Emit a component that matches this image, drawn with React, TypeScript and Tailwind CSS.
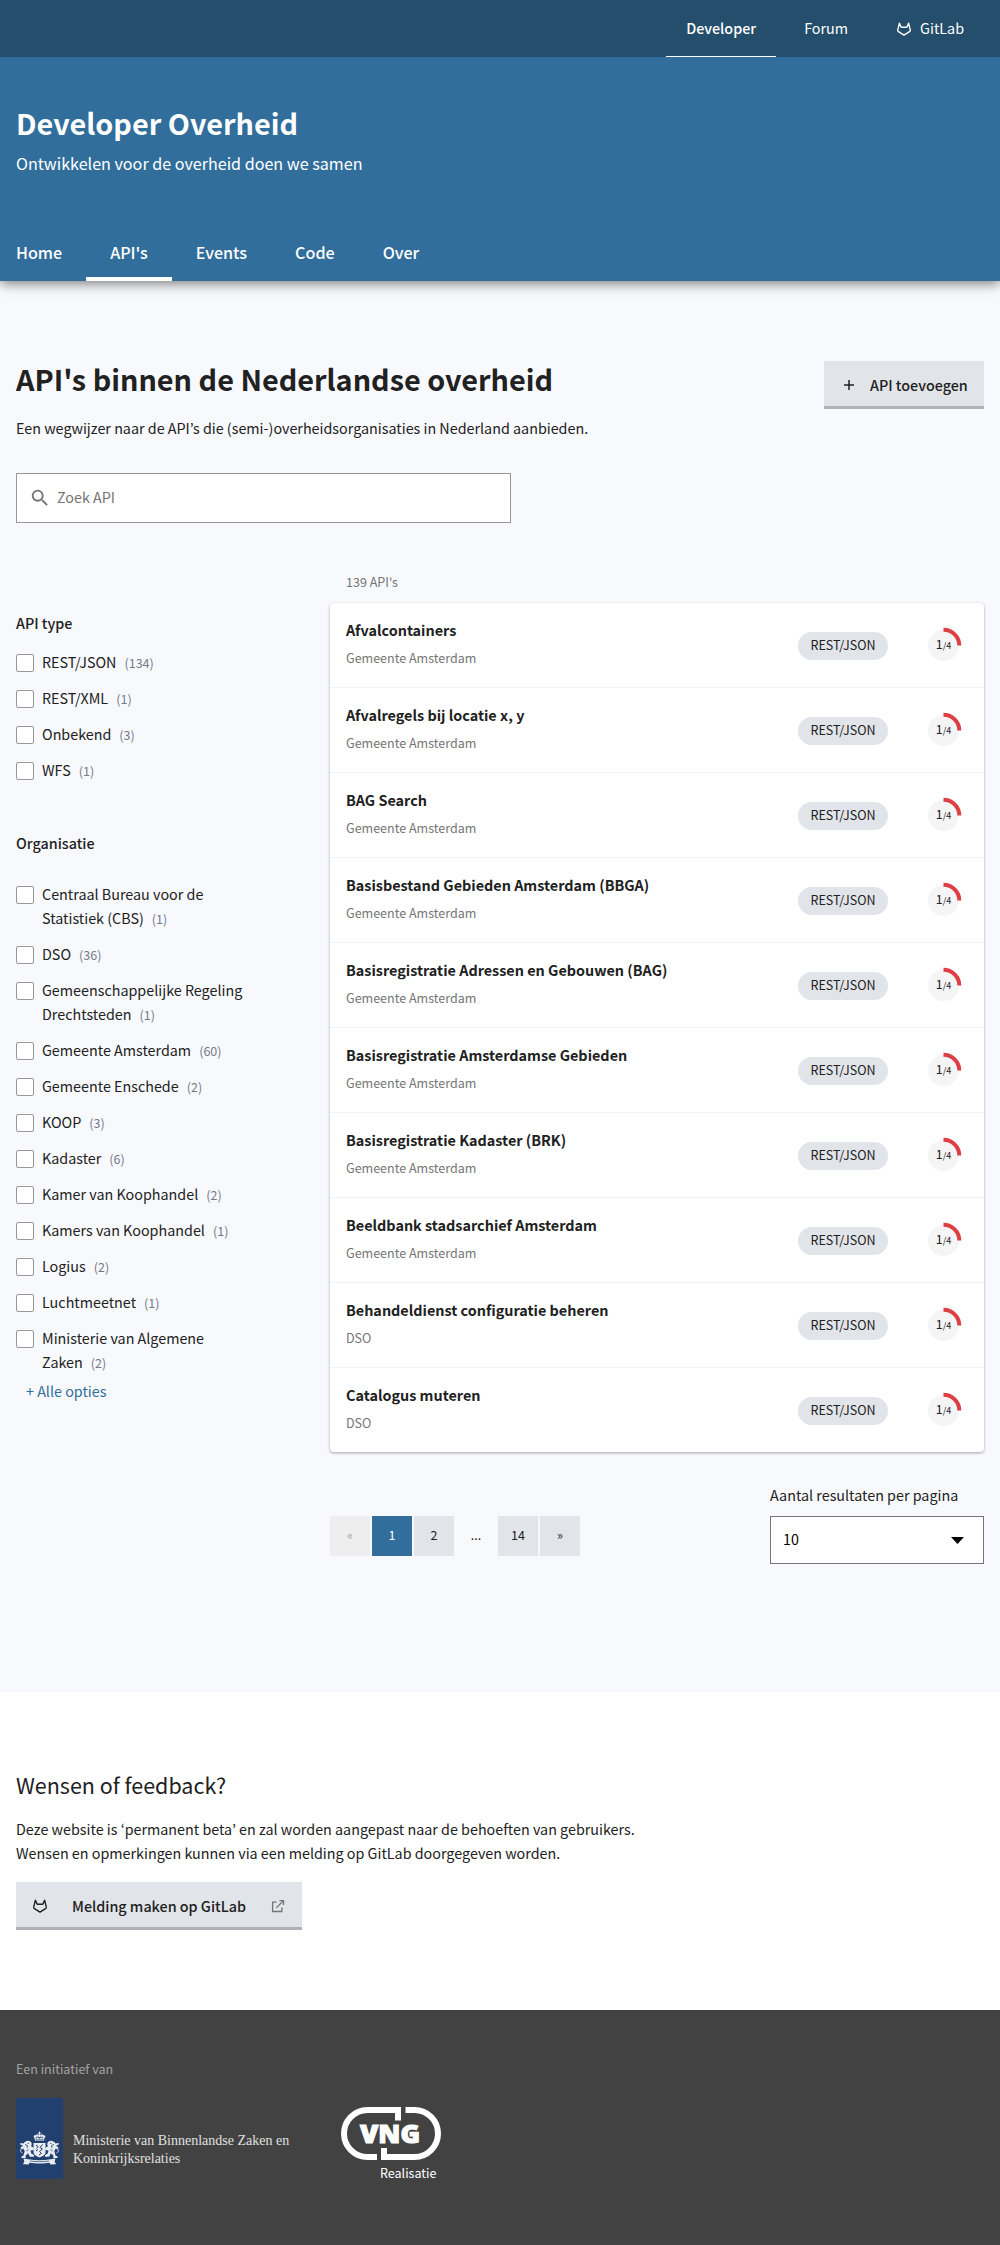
import { ReactNode } from "react";

const apiTypes: [string, number][] = [
  ["REST/JSON", 134],
  ["REST/XML", 1],
  ["Onbekend", 3],
  ["WFS", 1],
];

const organisations: [string, number][] = [
  ["Centraal Bureau voor de Statistiek (CBS)", 1],
  ["DSO", 36],
  ["Gemeenschappelijke Regeling Drechtsteden", 1],
  ["Gemeente Amsterdam", 60],
  ["Gemeente Enschede", 2],
  ["KOOP", 3],
  ["Kadaster", 6],
  ["Kamer van Koophandel", 2],
  ["Kamers van Koophandel", 1],
  ["Logius", 2],
  ["Luchtmeetnet", 1],
  ["Ministerie van Algemene Zaken", 2],
];

const apis: [string, string][] = [
  ["Afvalcontainers", "Gemeente Amsterdam"],
  ["Afvalregels bij locatie x, y", "Gemeente Amsterdam"],
  ["BAG Search", "Gemeente Amsterdam"],
  ["Basisbestand Gebieden Amsterdam (BBGA)", "Gemeente Amsterdam"],
  ["Basisregistratie Adressen en Gebouwen (BAG)", "Gemeente Amsterdam"],
  ["Basisregistratie Amsterdamse Gebieden", "Gemeente Amsterdam"],
  ["Basisregistratie Kadaster (BRK)", "Gemeente Amsterdam"],
  ["Beeldbank stadsarchief Amsterdam", "Gemeente Amsterdam"],
  ["Behandeldienst configuratie beheren", "DSO"],
  ["Catalogus muteren", "DSO"],
];

function GitLabIcon() {
  return (
    <svg className="h-4 w-4 shrink-0" viewBox="0 0 16 16" fill="none" stroke="currentColor" strokeWidth="1.4" strokeLinejoin="round">
      <path d="M3.4 2.2 5.2 6.3h5.6L12.6 2.2l1.7 7c.1.5 0 .8-.4 1.1L8 14.1l-5.9-3.8c-.4-.3-.5-.6-.4-1.1z" />
    </svg>
  );
}

function SearchIcon() {
  return (
    <svg className="h-[22px] w-[22px] shrink-0" viewBox="0 0 24 24" fill="#757575">
      <path d="M15.5 14h-.79l-.28-.27A6.471 6.471 0 0 0 16 9.5 6.5 6.5 0 1 0 9.5 16c1.61 0 3.09-.59 4.23-1.57l.27.28v.79l5 4.99L20.49 19l-4.99-5zm-6 0C7.01 14 5 11.99 5 9.5S7.01 5 9.5 5 14 7.01 14 9.5 11.99 14 9.5 14z" />
    </svg>
  );
}

function ExternalIcon() {
  return (
    <svg className="h-4 w-4 shrink-0" viewBox="0 0 16 16" fill="none" stroke="#757575" strokeWidth="1.3">
      <path d="M6.5 4.2H2.6v9.3h9.3V9.5M9.500 2.700h4V7M13.300 2.900 6.300 9.900" />
    </svg>
  );
}

function Score() {
  return (
    <div className="relative flex h-[31px] w-[31px] items-center justify-center rounded-full bg-[#f5f5f5] pb-0.5">
      <svg className="absolute -top-[3px] -left-[3px] h-[37px] w-[37px]" viewBox="0 0 37 37" fill="none">
        <path d="M18.5 2.7A15.8 15.8 0 0 1 34.3 18.5" stroke="#dc3f44" strokeWidth="4" />
      </svg>
      <span className="relative flex items-baseline leading-5">
        <span className="text-[12.5px]">1</span>
        <span className="text-[9px]">/4</span>
      </span>
    </div>
  );
}

function Filter({ label, count }: { label: string; count: number }) {
  return (
    <label className="mb-3 flex w-[236px] items-start">
      <span className="mt-[3px] mr-2 h-[18px] w-[18px] shrink-0 rounded-[2px] border border-[#979797] bg-white" />
      <span className="-mt-px mb-px max-w-[205px] text-[14.33px] leading-6">
        {label}
        <span className="ml-2 inline-block text-[12.54px] leading-5 text-[#75798a]">({count})</span>
      </span>
    </label>
  );
}

function NavItem({ children, active }: { children: ReactNode; active?: boolean }) {
  return (
    <a className={active ? "h-14 border-b-4 border-white px-6 pt-[15px]" : "h-14 px-6 pt-[15px]"}>
      {children}
    </a>
  );
}

function Lion() {
  return (
    <g>
      <path fill="#e8ecf2" d="M9.5 43.5c2.5-1.3 5-.6 6 1.5.5 1.3.2 2.5-.5 3.2l2.7 1.5v2.2l-3.2.6.8 3 2.7 1.500v1.8h-4.2l-1.6-3.5-2.7 2.5.3 2.2H5.500v-1.500l2-1 1.200-4.500-1.500-2.500-1.700 1-1-2 2.500-1.800-3-1.500.5-1.200 3 .6c.3-.9 1-1.600 2-2.100z" />
      <path stroke="#21406f" strokeWidth=".8" fill="none" d="M9 46.5l2.5 1-.5 2.5M12.5 51.5l-2 1.5M13 45.5l-1.5-.3" />
      <path stroke="#e8ecf2" strokeWidth=".9" fill="none" d="M6.5 55c-2.5-1-2.2-3-1-4.5" />
    </g>
  );
}

function Crest() {
  return (
    <svg className="h-[81px] w-[47px] shrink-0" viewBox="0 0 47 81">
      <path fill="#21406f" d="M0 0h47v81H0z" />
      <g fill="#e8ecf2">
        <path d="M23.1 33.5h.9v1.2h1.3v.9H24v1.6h-.9v-1.6h-1.3v-.9h1.3z" />
        <circle cx="19.2" cy="38.5" r="1.5" />
        <circle cx="21.3" cy="37.5" r="1.3" />
        <circle cx="23.5" cy="38" r="1.3" />
        <circle cx="25.7" cy="37.5" r="1.3" />
        <circle cx="27.8" cy="38.5" r="1.5" />
        <path d="M18.3 39.5l2 1.2 1.2-1.5 2 1.5 2-1.5 1.2 1.5 2-1.2-.9 3.5h-8.6z" />
        <path d="M17.5 45h12v9c0 3-3 4.3-6 5.5-3-1.2-6-2.5-6-5.5z" />
      </g>
      <path stroke="#21406f" strokeWidth="1" fill="none" d="M20 47l2 1.5-1.5 2M26.5 46.5l-2.5 3 2.5 1.5-3 2.5 2 2-2.5 1.5M20 53l2-1.5M19.5 42h8" />
      <Lion />
      <g transform="translate(47 0) scale(-1 1)">
        <Lion />
      </g>
      <path fill="#e8ecf2" d="M7.5 60.5l5 .8c7 1.2 15 1.2 22 0l5-.8-.8 3 1.3 2.7-5.5.3-1-1.7c-6 .9-14 .9-20 0l-1 1.7-5.5-.3 1.3-2.7z" />
      <path stroke="#21406f" strokeWidth=".7" fill="none" d="M14 63c6 .9 13 .9 19 0" />
    </svg>
  );
}

function VngLogo() {
  return (
    <svg className="block h-[53px] w-[100px]" viewBox="0 0 100 53" fill="none" stroke="#fff" strokeWidth="6">
      <path d="M57 13.5V3H26.5a23.5 23.5 0 0 0 0 47H36M43 41v9h30.5a23.5 23.5 0 0 0 0-47H64.5" />
      <text x="19" y="36" textLength="60" lengthAdjust="spacingAndGlyphs" fill="#fff" strokeWidth="1" className="font-['Open_Sans'] text-[24.5px] font-extrabold">VNG</text>
    </svg>
  );
}

export default function App() {
  return (
    <div className="min-h-[2245px] bg-white font-['Noto_Sans_CJK_KR',sans-serif] text-[14.33px] leading-6 text-[#212121]">
      <div className="relative z-10 flex h-[57px] justify-end gap-2 bg-[#244e6c] pr-4 text-white">
        <a className="border-b border-white px-5 pt-4 font-medium">Developer</a>
        <a className="px-5 pt-4">Forum</a>
        <a className="flex items-start gap-2 px-5 pt-4">
          <span className="mt-[5px]">
            <GitLabIcon />
          </span>
          GitLab
        </a>
      </div>

      <header className="relative flex h-[224px] flex-col bg-[#316e9b] text-white shadow-[0_2px_12px_rgba(0,0,0,0.55)]">
        <h1 className="mt-[46px] ml-4 text-[28.8px] leading-10 font-bold">Developer Overheid</h1>
        <p className="mt-2 ml-4 text-[16.12px] leading-6">Ontwikkelen voor de overheid doen we samen</p>
        <nav className="mt-auto -ml-2 flex text-[16.12px] leading-6 font-medium">
          <NavItem>Home</NavItem>
          <NavItem active>API's</NavItem>
          <NavItem>Events</NavItem>
          <NavItem>Code</NavItem>
          <NavItem>Over</NavItem>
        </nav>
      </header>

      <main className="h-[1411px] bg-[#f8f9fd] px-4 pt-20">
        <div className="flex justify-between">
          <div>
            <h2 className="-mt-0.5 text-[28.8px] leading-10 font-bold">API's binnen de Nederlandse overheid</h2>
            <p className="mt-[17px]">Een wegwijzer naar de API’s die (semi-)overheidsorganisaties in Nederland aanbieden.</p>
          </div>
          <button className="flex h-12 w-40 items-center border-b-[3px] border-[#b0b2b7] bg-[#e1e4e9] pt-0.5 pl-5 font-medium whitespace-nowrap">
            <svg className="mr-4 h-2.5 w-2.5" viewBox="0 0 10 10" stroke="#212121" strokeWidth="1.5">
              <path d="M5 0v10M0 5h10" />
            </svg>
            API toevoegen
          </button>
        </div>
        <div className="mt-[33px] flex h-[50px] w-[495px] items-center border border-[#979797] bg-white pl-3 text-[#757575]">
          <SearchIcon />
          <span className="mb-[3px] ml-1.5">Zoek API</span>
        </div>

        <div className="mt-[47px] flex justify-between">
          <aside className="w-[250px] pt-[41px]">
            <h3 className="font-medium">API type</h3>
            <div className="mt-4">
              {apiTypes.map(([l, c]) => (
                <Filter key={l} label={l} count={c} />
              ))}
            </div>
            <h3 className="mt-12 font-medium">Organisatie</h3>
            <div className="mt-7">
              {organisations.map(([l, c]) => (
                <Filter key={l} label={l} count={c} />
              ))}
            </div>
            <a className="-mt-2 ml-2.5 block text-[#316e9b]">+ Alle opties</a>
          </aside>

          <section className="w-[654px] pt-0.5">
            <p className="pl-4 text-[12.54px] leading-5 text-[#757575]">139 API's</p>
            <ul className="mt-[11px] rounded bg-white shadow-[0_1px_3px_rgba(0,0,0,0.35)]">
              {apis.map(([name, org]) => (
                <li key={name} className="flex h-[85px] items-start border-b border-[#f1f2f4] pl-4 last:h-[84px] last:border-0">
                  <div className="grow pt-[15px]">
                    <div className="text-[14.4px] leading-6 font-bold">{name}</div>
                    <div className="mt-1.5 text-[12.54px] leading-5 text-[#757575]">{org}</div>
                  </div>
                  <span className="mt-[29px] flex h-7 w-[90px] items-center justify-center rounded-full bg-[#e1e4e9] pb-0.5 text-[12.54px]">REST/JSON</span>
                  <div className="mt-[27px] mr-[25px] ml-10">
                    <Score />
                  </div>
                </li>
              ))}
            </ul>

            <div className="mt-[31px] flex items-end justify-between">
              <div className="mb-2 flex gap-0.5 text-[12.54px]">
                <span className="flex h-10 w-10 items-center justify-center bg-[#eeeeee] pb-0.5 text-[#a3a3a3]">«</span>
                <span className="flex h-10 w-10 items-center justify-center bg-[#316e9b] pb-0.5 text-white">1</span>
                <span className="flex h-10 w-10 items-center justify-center bg-[#e1e4e9] pb-0.5">2</span>
                <span className="flex h-10 w-10 items-center justify-center pb-0.5">...</span>
                <span className="flex h-10 w-10 items-center justify-center bg-[#e1e4e9] pb-0.5">14</span>
                <span className="flex h-10 w-10 items-center justify-center bg-[#e1e4e9] pb-0.5">»</span>
              </div>
              <div className="w-[214px]">
                <div>Aantal resultaten per pagina</div>
                <div className="mt-[9px] flex h-12 items-center justify-between border border-[#757575] bg-white pr-[19px] pb-0.5 pl-3 text-black">
                  10
                  <svg className="mt-[3px] h-[7px] w-[13px]" viewBox="0 0 13 7">
                    <path d="M0 0h13L6.5 7z" />
                  </svg>
                </div>
              </div>
            </div>
          </section>
        </div>
      </main>

      <section className="h-[318px] px-4 pt-[77px]">
        <h2 className="text-[21.49px] leading-8">Wensen of feedback?</h2>
        <p className="mt-4">
          Deze website is ‘permanent beta’ en zal worden aangepast naar de behoeften van gebruikers.
          <br />
          Wensen en opmerkingen kunnen via een melding op GitLab doorgegeven worden.
        </p>
        <button className="mt-[17px] flex h-12 w-[286px] items-center border-b-[3px] border-[#b0b2b7] bg-[#e1e4e9] pt-0.5 pl-4 font-medium">
          <GitLabIcon />
          <span className="mr-6 ml-6">Melding maken op GitLab</span>
          <ExternalIcon />
        </button>
      </section>

      <footer className="h-[235px] bg-[#424242] px-4 pt-[49px]">
        <p className="text-[12.54px] leading-5 text-[#a3a3a3]">Een initiatief van</p>
        <div className="mt-[19px] flex items-start">
          <Crest />
          <div className="mt-[34px] ml-2.5 w-[268px] font-['Liberation_Serif',serif] text-[14px] leading-[17.5px] text-[#e0e0e0]">
            Ministerie van Binnenlandse Zaken en
            <br />
            Koninkrijksrelaties
          </div>
          <div className="mt-[9px] w-[100px] text-white">
            <VngLogo />
            <div className="mt-[3px] pl-[39px] text-[12.54px] leading-5">Realisatie</div>
          </div>
        </div>
      </footer>
    </div>
  );
}
